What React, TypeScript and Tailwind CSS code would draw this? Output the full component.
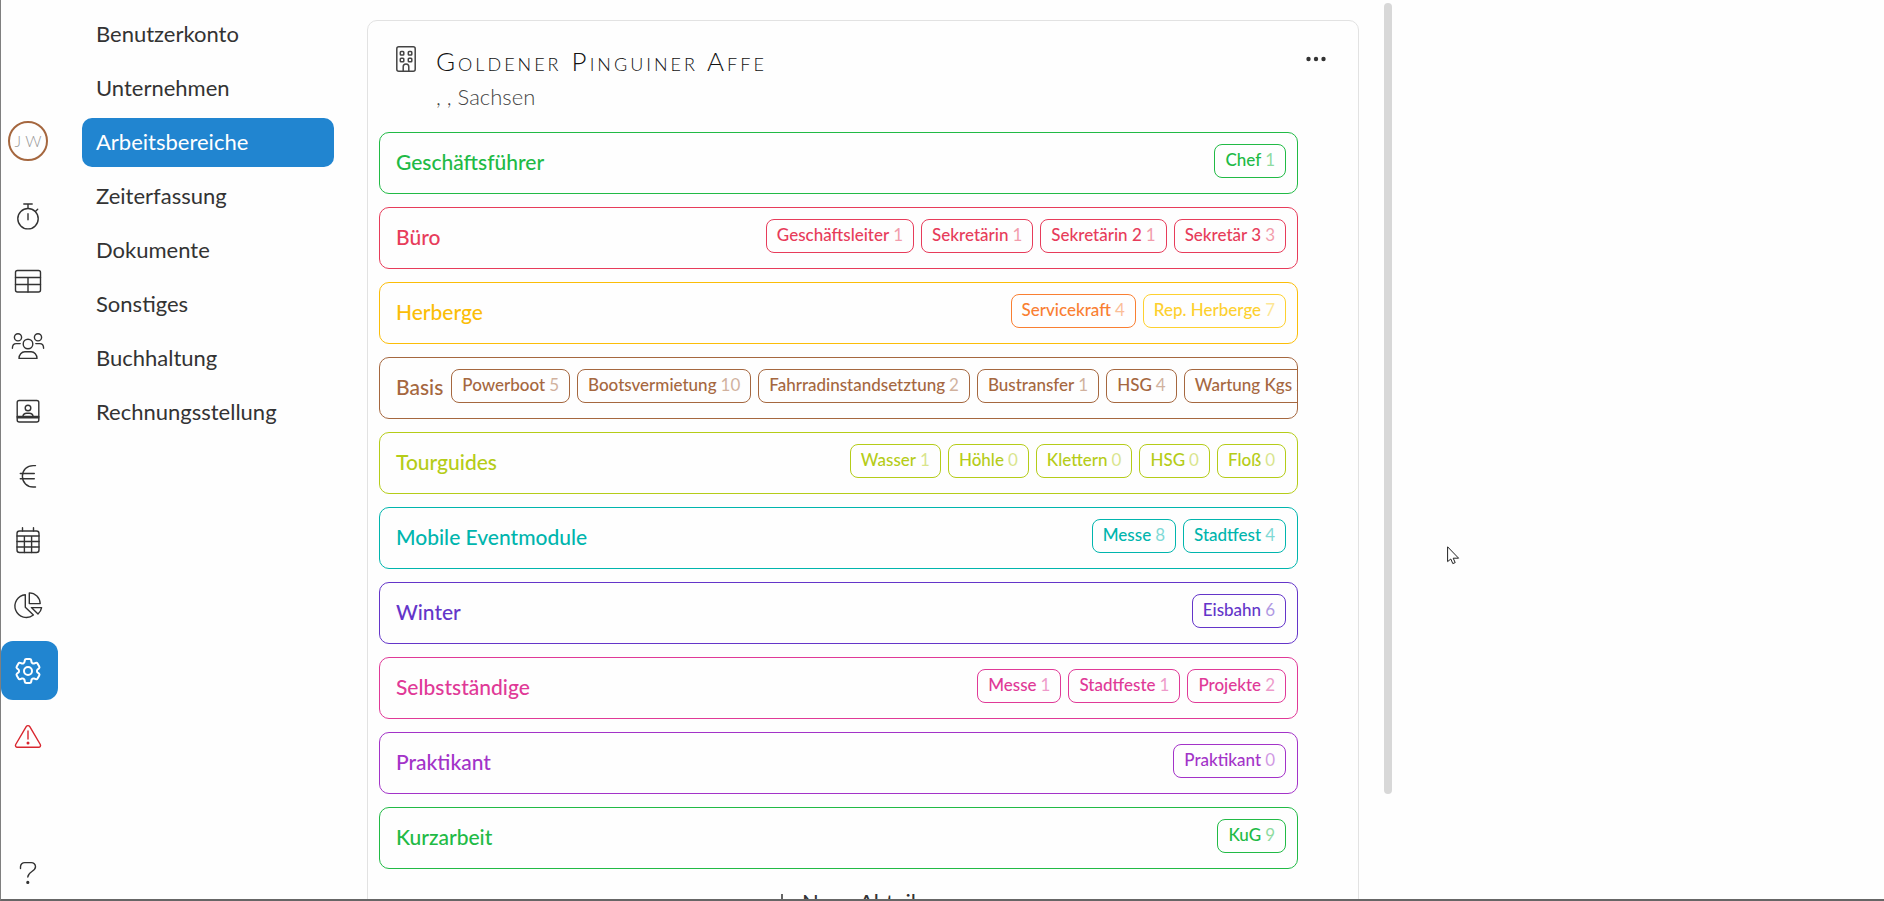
import type { ReactNode } from "react";
import { HiOutlineCog6Tooth } from "react-icons/hi2";

type Chip = { name: string; count: number; tone?: string };
type Department = { name: string; tone: string; chips: Chip[] };

const departments: Department[] = [
  { name: "Geschäftsführer", tone: "text-[#21ba45] border-[#21ba45]", chips: [{ name: "Chef", count: 1 }] },
  {
    name: "Büro",
    tone: "text-[#e73c5a] border-[#e73c5a]",
    chips: [
      { name: "Geschäftsleiter", count: 1 },
      { name: "Sekretärin", count: 1 },
      { name: "Sekretärin 2", count: 1 },
      { name: "Sekretär 3", count: 3 },
    ],
  },
  {
    name: "Herberge",
    tone: "text-[#fbbd08] border-[#fbbd08]",
    chips: [
      { name: "Servicekraft", count: 4, tone: "text-[#f97f32] border-[#f97f32]" },
      { name: "Rep. Herberge", count: 7, tone: "text-[#fdd02f] border-[#fdd02f]" },
    ],
  },
  {
    name: "Basis",
    tone: "text-[#a5673f] border-[#a5673f]",
    chips: [
      { name: "Powerboot", count: 5 },
      { name: "Bootsvermietung", count: 10 },
      { name: "Fahrradinstandsetztung", count: 2 },
      { name: "Bustransfer", count: 1 },
      { name: "HSG", count: 4 },
      { name: "Wartung Kgs", count: 2 },
    ],
  },
  {
    name: "Tourguides",
    tone: "text-[#b5cc18] border-[#b5cc18]",
    chips: [
      { name: "Wasser", count: 1 },
      { name: "Höhle", count: 0 },
      { name: "Klettern", count: 0 },
      { name: "HSG", count: 0 },
      { name: "Floß", count: 0 },
    ],
  },
  {
    name: "Mobile Eventmodule",
    tone: "text-[#00b5ad] border-[#00b5ad]",
    chips: [
      { name: "Messe", count: 8 },
      { name: "Stadtfest", count: 4 },
    ],
  },
  { name: "Winter", tone: "text-[#6435c9] border-[#6435c9]", chips: [{ name: "Eisbahn", count: 6 }] },
  {
    name: "Selbstständige",
    tone: "text-[#e03997] border-[#e03997]",
    chips: [
      { name: "Messe", count: 1 },
      { name: "Stadtfeste", count: 1 },
      { name: "Projekte", count: 2 },
    ],
  },
  { name: "Praktikant", tone: "text-[#a333c8] border-[#a333c8]", chips: [{ name: "Praktikant", count: 0 }] },
  { name: "Kurzarbeit", tone: "text-[#21ba45] border-[#21ba45]", chips: [{ name: "KuG", count: 9 }] },
];

const sections = [
  "Benutzerkonto",
  "Unternehmen",
  "Arbeitsbereiche",
  "Zeiterfassung",
  "Dokumente",
  "Sonstiges",
  "Buchhaltung",
  "Rechnungsstellung",
];

function Icon({ children }: { children: ReactNode }) {
  return (
    <svg
      viewBox="0 0 32 32"
      className="size-8 overflow-visible"
      fill="none"
      stroke="currentColor"
      strokeWidth="1.4"
      strokeLinecap="round"
      strokeLinejoin="round"
      aria-hidden="true"
    >
      {children}
    </svg>
  );
}

const tools: { label: string; tone: string; icon: ReactNode }[] = [
  {
    label: "Zeiterfassung",
    tone: "text-[#333]",
    icon: (
      <Icon>
        <circle cx="16" cy="18.7" r="10.2" />
        <path d="M11.8 4h8.4M16 4v4.4M23.4 11.4l2.3-2.2M16 13.8v6" />
      </Icon>
    ),
  },
  {
    label: "Tabelle",
    tone: "text-[#333]",
    icon: (
      <Icon>
        <rect x="3.5" y="5.5" width="25" height="21.5" rx="2" />
        <path d="M3.5 12.5h25M3.5 19.5h25M16 12.5V27" />
      </Icon>
    ),
  },
  {
    label: "Personal",
    tone: "text-[#333]",
    icon: (
      <Icon>
        <circle cx="16" cy="14" r="4.8" />
        <path d="M7 28.4c0-3.8 2.6-6.6 5.8-6.6h6.4c3.2 0 5.8 2.8 5.8 6.6z" />
        <circle cx="6" cy="7.3" r="3.6" />
        <circle cx="26" cy="7.3" r="3.6" />
        <path d="M.4 18.2c0-3 1.5-4.6 3.8-4.6h4M31.600 18.200c0-3-1.500-4.600-3.800-4.600h-4" />
      </Icon>
    ),
  },
  {
    label: "Kontakte",
    tone: "text-[#333]",
    icon: (
      <Icon>
        <rect x="5.2" y="5.5" width="21.6" height="21.5" rx="2" />
        <circle cx="16" cy="13" r="2.8" />
        <path d="M5.2 21.5h21.600M5.200 22.800h21.600M10.800 21.400c.3-2.200 1.900-3.200 3.900-3.200h2.600c2 0 3.600 1 3.900 3.200" />
      </Icon>
    ),
  },
  {
    label: "Finanzen",
    tone: "text-[#333]",
    icon: (
      <Icon>
        <path d="M23.500 5.600h-2.300C15 5.600 10.400 10 10.400 16.300S15 27 21.200 27h2.300M8.300 13.500h14M8.300 18.700h14" />
      </Icon>
    ),
  },
  {
    label: "Kalender",
    tone: "text-[#333]",
    icon: (
      <Icon>
        <rect x="5" y="6" width="22" height="21.5" rx="2.5" />
        <path d="M10.500 2.800V6M21.500 2.800V6M5 11h22M5 16.500h22M5 22h22M12.400 11v16.500M19.600 11v16.500" />
      </Icon>
    ),
  },
  {
    label: "Auswertung",
    tone: "text-[#333]",
    icon: (
      <Icon>
        <path d="M13.300 4.700A11.400 11.400 0 1 0 21.400 25L13.300 17.300z" />
        <path d="M17.300 2.900A11 11 0 0 1 28.200 13.600H17.300z" />
        <path d="M19.400 17.600H29.600A11 11 0 0 1 26 24z" />
      </Icon>
    ),
  },
  {
    label: "Einstellungen",
    tone: "bg-[#2185d0] text-white",
    icon: <HiOutlineCog6Tooth className="size-8" aria-hidden="true" />,
  },
  {
    label: "Warnungen",
    tone: "text-[#d9262e]",
    icon: (
      <Icon>
        <path d="M14.200 6.600 3.700 24.500a1.800 1.800 0 0 0 1.600 2.700h21.400a1.800 1.800 0 0 0 1.600-2.700L17.800 6.600a2.100 2.100 0 0 0-3.600 0z" />
        <path d="M16 11v8" />
        <circle cx="16" cy="23" r=".8" fill="currentColor" />
      </Icon>
    ),
  },
];

function Sidebar() {
  return (
    <nav aria-label="Hauptmenü" className="flex w-[57px] shrink-0 flex-col pt-[121px] pb-0.5">
      <button
        type="button"
        className="ml-[7px] flex size-10 shrink-0 items-center justify-center gap-1 rounded-full border-2 border-[#a5673f] text-base font-light text-[#999]"
      >
        <span>J</span>
        <span>W</span>
      </button>
      <div className="mt-[25px] flex flex-col gap-1.5">
        {tools.map((tool) => (
          <button
            key={tool.label}
            type="button"
            aria-label={tool.label}
            className={`flex h-[59px] w-full items-center justify-center rounded-xl pr-1 ${tool.tone}`}
          >
            {tool.icon}
          </button>
        ))}
      </div>
      <button type="button" aria-label="Hilfe" className="mt-auto flex h-12 items-center justify-center pr-1 text-[#333]">
        <Icon>
          <path d="M8.500 11.500V9.800a4.200 4.200 0 0 1 4.200-4.200h6.600a4.200 4.200 0 0 1 4.200 4.200c0 5-7.500 4.400-7.700 10.200" />
          <circle cx="15.8" cy="25.4" r=".9" fill="currentColor" />
        </Icon>
      </button>
    </nav>
  );
}

function SectionMenu() {
  return (
    <nav aria-label="Einstellungen" className="ml-6 flex w-[252px] shrink-0 flex-col gap-[5px] pt-[10px]">
      {sections.map((section) => {
        const active = section === "Arbeitsbereiche";
        return (
          <a
            key={section}
            href="#"
            aria-current={active ? "page" : undefined}
            className={`flex h-[49px] items-center rounded-[10px] px-3.5 pb-0.5 text-[22px] ${
              active ? "bg-[#2185d0] text-white" : "text-[#333]"
            }`}
          >
            {section}
          </a>
        );
      })}
    </nav>
  );
}

function DepartmentRow({ department }: { department: Department }) {
  return (
    <li className={`flex h-[62px] overflow-hidden rounded-[10px] border ${department.tone}`}>
      <h2 className="flex shrink-0 items-center pb-0.5 pl-4 text-[21px] font-medium">{department.name}</h2>
      <div className="ml-auto flex shrink-0 items-start gap-[7px] pt-[11px] pr-[11px] pl-2">
        {department.chips.map((chip) => (
          <button
            key={chip.name}
            type="button"
            className={`flex h-[34px] shrink-0 items-center gap-1 rounded-lg border px-2.5 pb-0.5 text-[17px] font-medium whitespace-nowrap ${
              chip.tone ?? department.tone
            }`}
          >
            {chip.name}
            <span className="font-normal opacity-50">{chip.count}</span>
          </button>
        ))}
      </div>
    </li>
  );
}

export default function App() {
  return (
    <div className="relative flex h-screen overflow-hidden border-b-2 border-l border-b-[#666] border-l-[#7f7f7f] bg-[#fefefe] font-['Lato','Liberation_Sans',sans-serif]">
      <Sidebar />
      <SectionMenu />
      <main className="ml-[33px] flex w-[1025px] shrink-0 items-start justify-between overflow-hidden">
        <section className="mt-5 w-[992px] rounded-[10px] border border-[#e2e2e2] pb-8">
          <header className="flex items-start pt-6 pr-8 pl-7">
            <svg viewBox="0 0 20 26" className="mt-px h-[26px] w-5" fill="none" stroke="#444" strokeWidth="1.5" aria-hidden="true">
              <rect x=".8" y=".8" width="18.4" height="24.4" rx="2" />
              <rect x="4.3" y="5.6" width="3.5" height="3.5" rx=".8" />
              <rect x="12.3" y="5.6" width="3.5" height="3.5" rx=".8" />
              <rect x="4.3" y="12.2" width="3.5" height="3.5" rx=".8" />
              <rect x="12.3" y="12.2" width="3.5" height="3.5" rx=".8" />
              <path d="M7.200 25.300v-4.600a2.800 2.800 0 0 1 5.600 0v4.600" />
            </svg>
            <div className="ml-5 flex-1">
              <h1 className="text-[26px] leading-8 font-light tracking-[3px] text-[#111] [font-variant-caps:small-caps]">
                Goldener Pinguiner Affe
              </h1>
              <p className="mt-1 text-[22px] leading-8 font-light text-[#444]">, , Sachsen</p>
            </div>
            <button type="button" aria-label="Mehr" className="mt-1 flex h-5 items-center text-[#333]">
              <svg viewBox="0 0 20 6" className="h-1.5 w-5" fill="currentColor" aria-hidden="true">
                <circle cx="2.5" cy="3" r="2.2" />
                <circle cx="10" cy="3" r="2.2" />
                <circle cx="17.5" cy="3" r="2.2" />
              </svg>
            </button>
          </header>
          <ul className="mt-[19px] mr-[60px] ml-[11px] flex flex-col gap-[13px]">
            {departments.map((department) => (
              <DepartmentRow key={department.name} department={department} />
            ))}
          </ul>
          <button type="button" className="mt-[17px] flex w-full items-center justify-center gap-3 text-[22px] leading-8 text-[#333]">
            <svg viewBox="0 0 16 16" className="size-4" stroke="currentColor" strokeWidth="1.5" aria-hidden="true">
              <path d="M8 0v16M0 8h16" />
            </svg>
            Neue Abteilung
          </button>
        </section>
        <div className="mt-[3px] h-[791px] w-2 rounded-full bg-[#d8d8d8]" />
      </main>
      <svg viewBox="0 0 13 19" className="absolute top-[546px] left-[1446px] h-[19px] w-[13px]" aria-hidden="true">
        <path d="M.6.800v14.800l3.200-2.600 2 4.600 2.400-1-2-4.400h5.400z" fill="#fff" stroke="#222" strokeWidth="1" />
      </svg>
    </div>
  );
}
